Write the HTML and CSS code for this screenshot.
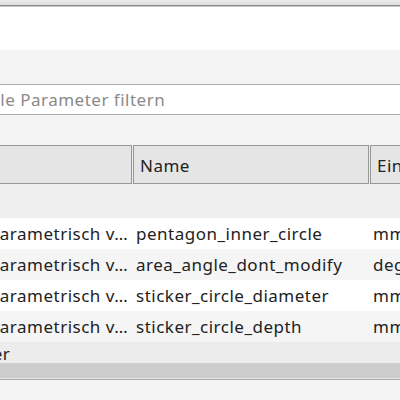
FILE: index.html
```html
<!DOCTYPE html>
<html lang="de">
<head>
  <meta charset="UTF-8" />
  <title>Parameter</title>
  <link rel="stylesheet" href="styles.css">
</head>
<body>
<div class="titlebar"></div>
<div class="toolbar"></div>
<div class="panel">
  <div class="window">
    <div class="filter">
      <input type="text" placeholder="Alle Parameter filtern">
    </div>
    <div class="grid">
      <div class="row head">
        <div class="cell c0">Parameter</div>
        <div class="cell c1"></div>
        <div class="cell name">Name</div>
        <div class="cell unit">Einheit</div>
      </div>
      <div class="group open"><span class="group-label">Modellparameter</span></div>
      <div class="row">
        <div class="cell c0"></div>
        <div class="cell c1">Parametrisch v…</div>
        <div class="cell name">pentagon_inner_circle</div>
        <div class="cell unit">mm</div>
      </div>
      <div class="row alt">
        <div class="cell c0"></div>
        <div class="cell c1">Parametrisch v…</div>
        <div class="cell name">area_angle_dont_modify</div>
        <div class="cell unit">deg</div>
      </div>
      <div class="row">
        <div class="cell c0"></div>
        <div class="cell c1">Parametrisch v…</div>
        <div class="cell name">sticker_circle_diameter</div>
        <div class="cell unit">mm</div>
      </div>
      <div class="row alt">
        <div class="cell c0"></div>
        <div class="cell c1">Parametrisch v…</div>
        <div class="cell name">sticker_circle_depth</div>
        <div class="cell unit">mm</div>
      </div>
      <div class="group user"><span class="group-label">Benutzerparameter</span></div>
    </div>
  </div>
  <div class="hscroll"></div>
</div>
</body>
</html>
```

FILE: styles.css
```css
body {
  margin: 0;
  width: 400px;
  height: 400px;
  overflow: hidden;
  background-color: #f4f4f4;
  font-family: "Noto Sans", sans-serif;
  font-size: 17px;
  letter-spacing: 0.5px;
  color: #222;
}
.titlebar {
  height: 5px;
  background: linear-gradient(#ececec, #dcdcdc);
  border-bottom: 1px solid #8a8a8a;
}
.toolbar {
  height: 43px;
  background-color: #fff;
  border-top: 1px solid #c6c6c6;
}
.panel {
  background-color: #f4f4f4;
  padding-top: 34px;
}
/* the list is scrolled sideways, so its left part sits off screen */
.window {
  margin-left: -215px;
  width: 800px;
}
.filter {
  padding-left: 190px;
}
.filter input {
  display: block;
  width: 600px;
  height: 31px;
  box-sizing: border-box;
  border: 1px solid #acacac;
  padding: 0 8px;
  background-color: #fff;
  font: inherit;
  letter-spacing: inherit;
  color: #222;
}
.filter input::placeholder {
  color: #8a8a8a;
}
.grid {
  margin-top: 30px;
}
.row {
  display: flex;
  height: 31px;
  background-color: #fff;
}
.row.alt {
  background-color: #f5f5f5;
}
.cell {
  box-sizing: border-box;
  padding: 0 4px;
  line-height: 31px;
  white-space: nowrap;
  overflow: hidden;
}
.c0 { width: 200px; }
.c1 { width: 147px; }
.name { width: 237px; }
.unit { width: 200px; }

.row.head {
  height: 39px;
  gap: 1px;
  background-color: #ededed;
}
.head .cell {
  height: 39px;
  line-height: 39px;
  padding: 0 6px;
  background-color: #e5e5e5;
  border: 1px solid #969696;
}
.head .c1 { width: 146px; }
.head .name { width: 236px; }

.group {
  height: 34px;
  line-height: 34px;
  background-color: #efefef;
  white-space: nowrap;
}
.group.user {
  height: 21px;
  line-height: 24px;
  background-color: #ececec;
}
.group-label {
  padding-left: 60px;
}
.hscroll {
  height: 15px;
  background-color: #cdcdcd;
  border-bottom: 1px solid #e6e6e6;
  box-shadow: 0 1px 0 #a8a8a8;
}
```
